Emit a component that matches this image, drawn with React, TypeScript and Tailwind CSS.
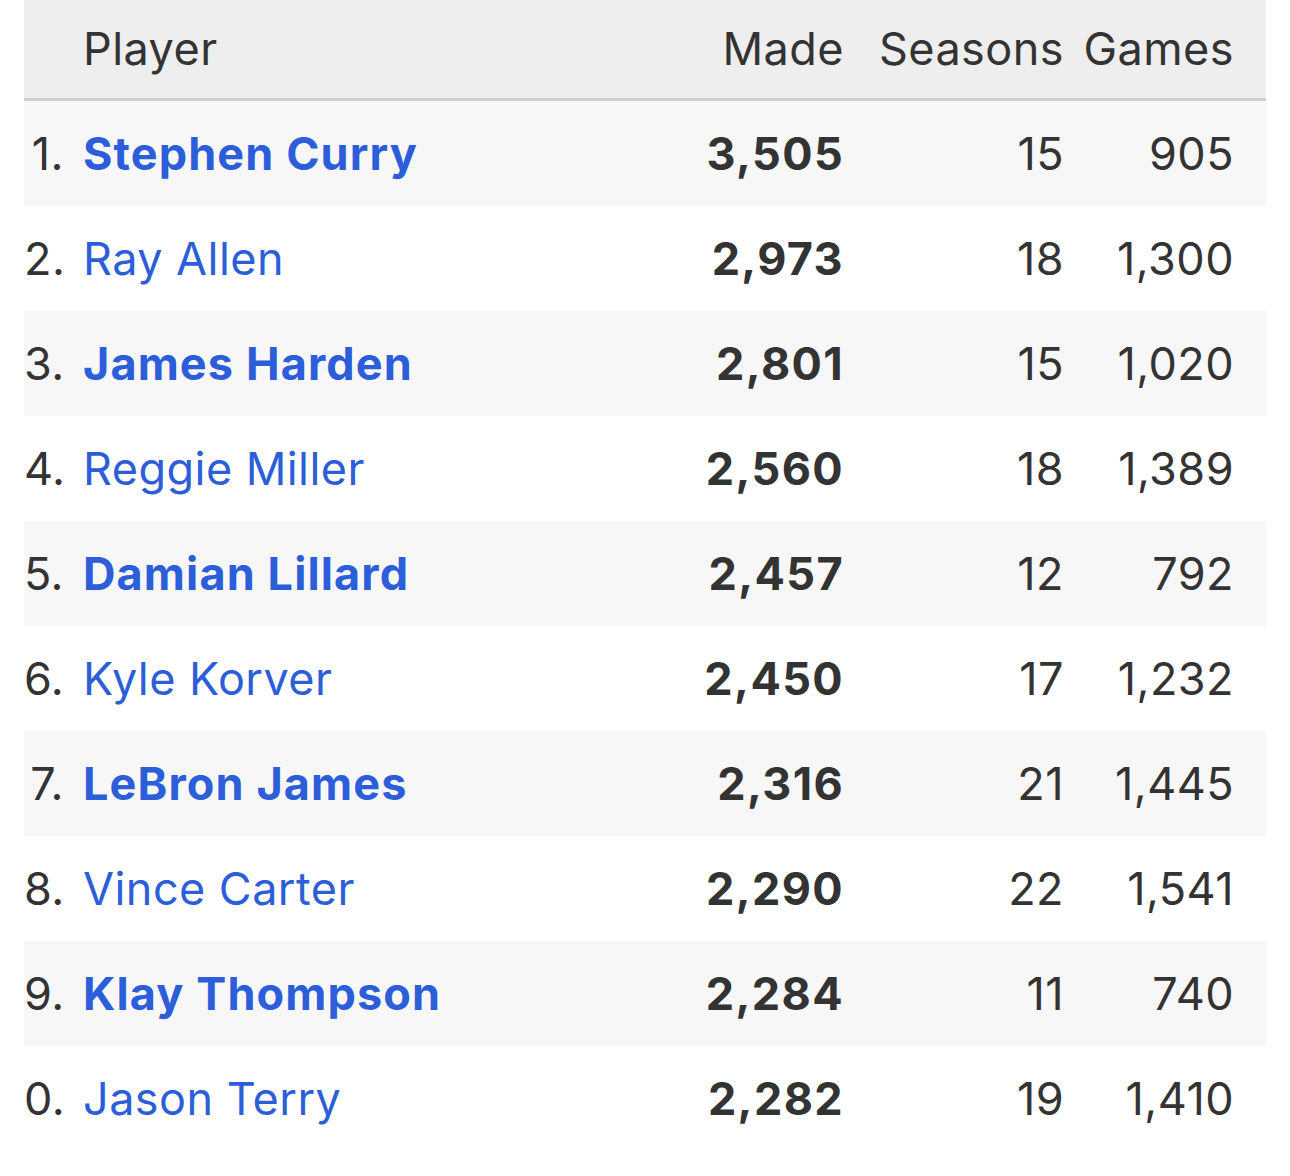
import React from "react";

type Row = {
  rank: string;
  name: string;
  active: boolean;
  made: string;
  seasons: string;
  games: string;
};

const rows: Row[] = [
  { rank: "1.", name: "Stephen Curry", active: true, made: "3,505", seasons: "15", games: "905" },
  { rank: "2.", name: "Ray Allen", active: false, made: "2,973", seasons: "18", games: "1,300" },
  { rank: "3.", name: "James Harden", active: true, made: "2,801", seasons: "15", games: "1,020" },
  { rank: "4.", name: "Reggie Miller", active: false, made: "2,560", seasons: "18", games: "1,389" },
  { rank: "5.", name: "Damian Lillard", active: true, made: "2,457", seasons: "12", games: "792" },
  { rank: "6.", name: "Kyle Korver", active: false, made: "2,450", seasons: "17", games: "1,232" },
  { rank: "7.", name: "LeBron James", active: true, made: "2,316", seasons: "21", games: "1,445" },
  { rank: "8.", name: "Vince Carter", active: false, made: "2,290", seasons: "22", games: "1,541" },
  { rank: "9.", name: "Klay Thompson", active: true, made: "2,284", seasons: "11", games: "740" },
  { rank: "0.", name: "Jason Terry", active: false, made: "2,282", seasons: "19", games: "1,410" },
];

const App: React.FC = () => {
  return (
    <div className="min-h-[1176px] w-[1290px] bg-white font-['Inter','Liberation_Sans',sans-serif] text-[45px] tracking-[0.01em] text-[#333333]">
      <div className="mx-[24px]">
        {/* header */}
        <div className="flex h-[101px] items-center border-b-[3px] border-[#cdcdcd] bg-[#eeeeee] pr-[32px]">
          <div className="w-[40px]" />
          <div className="ml-[19px] flex-1">Player</div>
          <div className="w-[200px] text-right">Made</div>
          <div className="w-[220px] text-right">Seasons</div>
          <div className="w-[170px] text-right">Games</div>
        </div>

        {rows.map((r, i) => (
          <div
            key={r.name}
            className={`flex h-[105px] items-center pr-[32px] ${
              i % 2 === 0 ? "bg-[#f7f7f7]" : "bg-white"
            }`}
          >
            <div className="w-[40px] text-right">{r.rank}</div>
            <div
              className={`ml-[19px] flex-1 text-[#2b5ed8] ${
                r.active ? "font-bold tracking-[0.025em]" : "font-normal"
              }`}
            >
              {r.name}
            </div>
            <div className="w-[200px] text-right font-bold tracking-[0.03em]">{r.made}</div>
            <div className="w-[220px] text-right">{r.seasons}</div>
            <div className="w-[170px] text-right">{r.games}</div>
          </div>
        ))}
      </div>
    </div>
  );
};

export default App;
